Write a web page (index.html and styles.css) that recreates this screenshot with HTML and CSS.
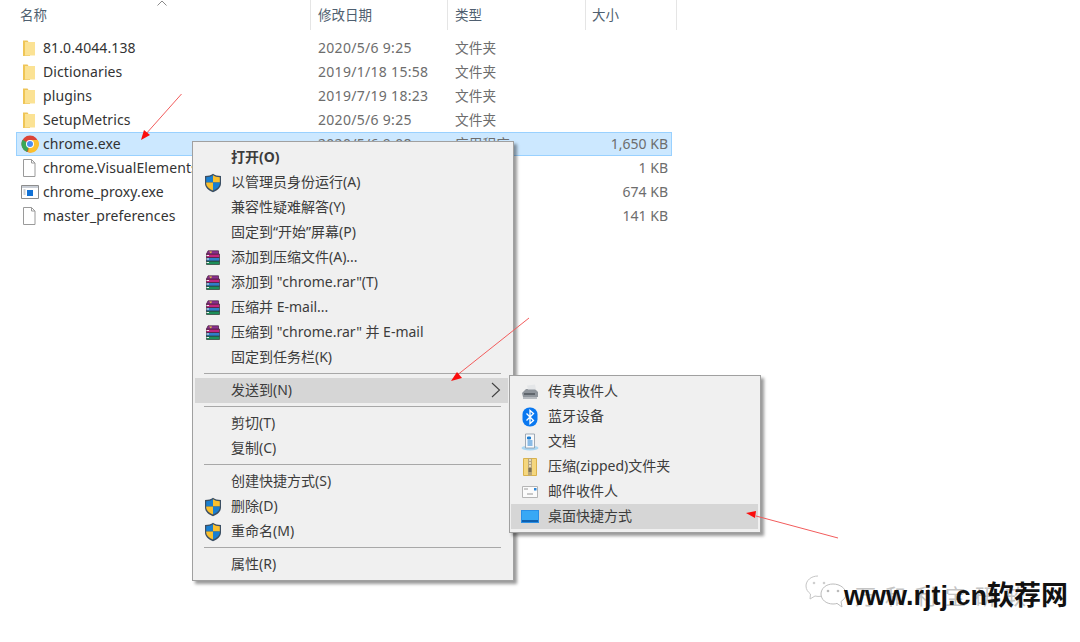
FILE: index.html
```html
<!DOCTYPE html>
<html lang="zh">
<head>
<meta charset="utf-8">
<title>chrome</title>
<link rel="stylesheet" href="styles.css">
</head>
<body>
<svg width="0" height="0" class="defs">
  <defs>
    <symbol id="folder" viewBox="0 0 16 16">
      <path d="M0 .5h4.500l1 1.500H7v14H0z" fill="#eec45a"/>
      <path d="M1.500 2H12v13.500H1.500z" fill="#fbe294"/>
      <path d="M.5 1v14.500H2V1z" fill="#f0c654"/>
    </symbol>
    <symbol id="file" viewBox="0 0 16 20">
      <path d="M.5 1.500h8l3.500 3.500v13.500H.500z" fill="#fff" stroke="#9a9a9a"/>
      <path d="M8.500 1.500V5H12" fill="none" stroke="#9a9a9a"/>
    </symbol>
    <symbol id="shield" viewBox="0 0 18 20">
      <path d="M9 .8c2 1.500 4.500 2.200 8 2.300v7.400c0 4-3.500 7-8 8.700-4.500-1.700-8-4.700-8-8.700V3.100C4.500 3 7 2.300 9 .8z" fill="#3c4f63"/>
      <path d="M9 2.200v7.300H2.200V4.200C5 4 7.300 3.400 9 2.200z" fill="#1a7fd0"/>
      <path d="M9 2.200c1.700 1.200 4 1.800 6.800 2v5.300H9z" fill="#fbc02d"/>
      <path d="M2.200 9.500H9v8C5 16 2.400 13.500 2.200 10.500z" fill="#fbc02d"/>
      <path d="M15.800 9.500H9v8c4-1.500 6.600-4 6.800-7z" fill="#1a7fd0"/>
    </symbol>
    <symbol id="rar" viewBox="0 0 16 16">
      <path d="M1.500 11h13v3.500h-13z" fill="#1d8f5a" stroke="#2d3a33" stroke-width=".7"/>
      <path d="M1.500 7.500h13V11h-13z" fill="#2f7fc9" stroke="#2a3445" stroke-width=".7"/>
      <path d="M1.500 4h13v3.500h-13z" fill="#c0257f" stroke="#43203a" stroke-width=".7"/>
      <path d="M3 .8h10.500V4H1.500z" fill="#8b2f8f" stroke="#43203a" stroke-width=".7"/>
      <path d="M4 1.500h3L6 3.400z" fill="#e8c73e"/>
      <path d="M1.500 5.500h2.500M1.500 9h2.500M1.500 12.500h2.500" stroke="#eee" stroke-width="1.200"/>
    </symbol>
  </defs>
</svg>

<div class="sort-caret">
  <svg width="10" height="6" viewBox="0 0 10 6"><path d="M.5 5.500 5 1l4.500 4.500" fill="none" stroke="#8a8a8a"/></svg>
</div>

<div class="explorer">
  <div class="header">
    <div class="col-h col-name">名称</div>
    <div class="col-h col-date">修改日期</div>
    <div class="col-h col-type">类型</div>
    <div class="col-h col-size">大小</div>
  </div>
  <div class="rows">
    <div class="row">
      <div class="cell-name"><svg class="ficon" width="16" height="16"><use href="#folder"/></svg>81.0.4044.138</div>
      <div class="cell-date">2020/5/6 9:25</div><div class="cell-type">文件夹</div><div class="cell-size"></div>
    </div>
    <div class="row">
      <div class="cell-name"><svg class="ficon" width="16" height="16"><use href="#folder"/></svg>Dictionaries</div>
      <div class="cell-date">2019/1/18 15:58</div><div class="cell-type">文件夹</div><div class="cell-size"></div>
    </div>
    <div class="row">
      <div class="cell-name"><svg class="ficon" width="16" height="16"><use href="#folder"/></svg>plugins</div>
      <div class="cell-date">2019/7/19 18:23</div><div class="cell-type">文件夹</div><div class="cell-size"></div>
    </div>
    <div class="row">
      <div class="cell-name"><svg class="ficon" width="16" height="16"><use href="#folder"/></svg>SetupMetrics</div>
      <div class="cell-date">2020/5/6 9:25</div><div class="cell-type">文件夹</div><div class="cell-size"></div>
    </div>
    <div class="row row-selected">
      <div class="cell-name">
        <svg class="ficon ficon-wide" width="18" height="18" viewBox="0 0 18 18">
          <circle cx="9" cy="9" r="8.500" fill="#db4437"/>
          <path d="M9 9 1.600 4.800A8.500 8.500 0 0 0 6 17z" fill="#3aa757"/>
          <path d="M9 5h7.800A8.500 8.500 0 0 1 7 17.300z" fill="#fbc02d"/>
          <circle cx="9" cy="9" r="4" fill="#fff"/>
          <circle cx="9" cy="9" r="3" fill="#4a8df0"/>
        </svg>chrome.exe</div>
      <div class="cell-date">2020/5/6 9:08</div><div class="cell-type">应用程序</div><div class="cell-size">1,650 KB</div>
    </div>
    <div class="row">
      <div class="cell-name"><svg class="ficon" width="16" height="20"><use href="#file"/></svg>chrome.VisualElementsManifest</div>
      <div class="cell-date">2020/5/6 9:08</div><div class="cell-type">XML 文档</div><div class="cell-size">1 KB</div>
    </div>
    <div class="row">
      <div class="cell-name">
        <svg class="ficon ficon-wide" width="18" height="16" viewBox="0 0 18 16">
          <path d="M.5 1.500h17v13H.500z" fill="#fff" stroke="#8d8d8d"/>
          <path d="M1 2h16v2H1z" fill="#c9ced6"/>
          <path d="M6 6h6v6H6z" fill="#1272d6"/>
          <path d="M2.500 6h2M2.500 8h2M2.500 10h2" stroke="#9aa0a8"/>
        </svg>chrome_proxy.exe</div>
      <div class="cell-date">2020/5/6 9:08</div><div class="cell-type">应用程序</div><div class="cell-size">674 KB</div>
    </div>
    <div class="row">
      <div class="cell-name"><svg class="ficon" width="16" height="20"><use href="#file"/></svg>master_preferences</div>
      <div class="cell-date">2020/5/6 9:08</div><div class="cell-type">文件</div><div class="cell-size">141 KB</div>
    </div>
  </div>
</div>

<div class="menu menu-main">
  <div class="item item-bold"><span class="mi"></span>打开(O)</div>
  <div class="item"><span class="mi"><svg width="18" height="20"><use href="#shield"/></svg></span>以管理员身份运行(A)</div>
  <div class="item"><span class="mi"></span>兼容性疑难解答(Y)</div>
  <div class="item"><span class="mi"></span>固定到“开始”屏幕(P)</div>
  <div class="item"><span class="mi"><svg width="16" height="16"><use href="#rar"/></svg></span>添加到压缩文件(A)...</div>
  <div class="item"><span class="mi"><svg width="16" height="16"><use href="#rar"/></svg></span>添加到 "chrome.rar"(T)</div>
  <div class="item"><span class="mi"><svg width="16" height="16"><use href="#rar"/></svg></span>压缩并 E-mail...</div>
  <div class="item"><span class="mi"><svg width="16" height="16"><use href="#rar"/></svg></span>压缩到 "chrome.rar" 并 E-mail</div>
  <div class="item"><span class="mi"></span>固定到任务栏(K)</div>
  <div class="sep"></div>
  <div class="item item-hover"><span class="mi"></span>发送到(N)
    <svg class="chev" width="10" height="16" viewBox="0 0 10 16"><path d="M1 1l7.500 7L1 15" fill="none" stroke="#404040" stroke-width="1.100"/></svg>
  </div>
  <div class="sep"></div>
  <div class="item"><span class="mi"></span>剪切(T)</div>
  <div class="item"><span class="mi"></span>复制(C)</div>
  <div class="sep"></div>
  <div class="item"><span class="mi"></span>创建快捷方式(S)</div>
  <div class="item"><span class="mi"><svg width="18" height="20"><use href="#shield"/></svg></span>删除(D)</div>
  <div class="item"><span class="mi"><svg width="18" height="20"><use href="#shield"/></svg></span>重命名(M)</div>
  <div class="sep"></div>
  <div class="item"><span class="mi"></span>属性(R)</div>
</div>

<div class="menu menu-sub">
  <div class="item"><span class="si">
    <svg width="18" height="16" viewBox="0 0 18 16">
      <path d="M1 9l4-4h9l3 3v5H2z" fill="#8f959c"/><path d="M6 1.500l8-1 1 5H7z" fill="#e4e6e8"/><path d="M3 9h11v2H3z" fill="#5f656c"/><path d="M2 13h14v2H2z" fill="#b6babf"/>
    </svg></span>传真收件人</div>
  <div class="item"><span class="si">
    <svg width="16" height="20" viewBox="0 0 16 20">
      <rect x=".5" y=".5" width="15" height="19" rx="7" fill="#0a78f0"/>
      <path d="M4.500 6.500l7 7L8 16.500v-13l3.500 3-7 7" fill="none" stroke="#fff" stroke-width="1.300"/>
    </svg></span>蓝牙设备</div>
  <div class="item"><span class="si">
    <svg width="18" height="18" viewBox="0 0 18 18">
      <ellipse cx="9" cy="15" rx="8.500" ry="2.500" fill="#a9d6f2"/>
      <path d="M4.500 1h9v14h-9z" fill="#f7f9fb" stroke="#8a97a5" stroke-width=".8"/>
      <path d="M6.500 4h3v2h-3zM6.500 8h5M6.500 10h5M6.500 12h5" stroke="#1f7fd1" fill="#1f7fd1"/>
    </svg></span>文档</div>
  <div class="item"><span class="si">
    <svg width="14" height="18" viewBox="0 0 14 18">
      <path d="M.5.500h13v17H.500z" fill="#f5d77e" stroke="#d9b24c"/>
      <path d="M5 .5h4v17H5z" fill="#b8a67a"/>
      <path d="M6 2h2M6 5h2M6 8h2" stroke="#f0ead8" stroke-width="1.300"/>
      <path d="M5.500 10h3v4h-3z" fill="#7c7055"/>
    </svg></span>压缩(zipped)文件夹</div>
  <div class="item"><span class="si">
    <svg width="16" height="12" viewBox="0 0 16 12">
      <path d="M.5.500h15v11H.500z" fill="#fbfbfb" stroke="#b5b5b5"/>
      <path d="M12 2h2.500v2.500H12z" fill="#2d86d8"/><path d="M2 3h4" stroke="#9a9a9a"/><path d="M5 7h6v2H5z" fill="#c9c9c9"/>
    </svg></span>邮件收件人</div>
  <div class="item item-hover"><span class="si">
    <svg width="18" height="13" viewBox="0 0 18 13">
      <path d="M0 0h18v13H0z" fill="#2a8fe6"/><path d="M1 1h16v9H1z" fill="#38a8f5"/><path d="M1 11h16" stroke="#0d5fae" stroke-width="2"/>
    </svg></span>桌面快捷方式</div>
</div>

<svg class="arrows" width="1080" height="642" viewBox="0 0 1080 642">
  <g fill="none" stroke="#f25c5c" stroke-width="1">
    <path d="M181.500 94 145 135"/>
    <path d="M529 318 456 376"/>
    <path d="M838 538 756 516"/>
  </g>
  <g fill="#fb0d0d">
    <path d="M141 140l3-10 6 5z"/>
    <path d="M451 381l6-9 5 6z"/>
    <path d="M746 513l10-2-1 7z"/>
  </g>
</svg>

<div class="watermark">
  <svg class="wm-icon" width="44" height="36" viewBox="0 0 44 36">
    <path d="M14 2C7 2 2 6.500 2 12c0 3.500 2 6 4.500 8L6 25l5-3c2 .5 4 .6 6 .3" fill="#fff" stroke="#c6c6c6"/>
    <path d="M29 10c-7 0-12 4.500-12 10s5 10 12 10c1.500 0 3-.2 4-.6l5 3.600-1-5.500c3-2 5-4.500 5-7.500 0-5.500-6-10-13-10z" fill="#fff" stroke="#bdbdbd"/>
    <circle cx="10" cy="9" r="1.300" fill="#cfcfcf"/><circle cx="20" cy="9" r="1.300" fill="#cfcfcf"/>
    <circle cx="24" cy="17" r="1.300" fill="#bbb"/><circle cx="34" cy="17" r="1.300" fill="#bbb"/>
  </svg>
  <div class="wm-faint">万和利宝研软</div>
  <div class="wm-text">www.rjtj.cn软荐网</div>
</div>
</body>
</html>
```
FILE: styles.css
```css
* { box-sizing: border-box; }
html, body { margin: 0; padding: 0; }
body {
  width: 1080px;
  height: 642px;
  overflow: hidden;
  position: relative;
  background: #fff;
  font-family: "Noto Sans", "Noto Sans CJK SC", sans-serif;
  font-size: 14px;
  color: #3d3d3d;
}
.defs { position: absolute; }
.sort-caret { position: absolute; left: 157px; top: 0; line-height: 0; }

.explorer { width: 680px; }
.header { display: flex; height: 30px; color: #4f5f70; font-size: 13.500px; }
.col-h { border-right: 1px solid #e5e5e5; padding-top: 6px; line-height: 18px; }
.col-name { width: 311px; padding-left: 20px; }
.col-date { width: 137px; padding-left: 7px; }
.col-type { width: 138px; padding-left: 7px; }
.col-size { width: 91px; padding-left: 6px; }

.rows { padding: 6px 0 0 16px; width: 672px; }
.row {
  display: flex;
  align-items: center;
  height: 24px;
  border: 1px solid transparent;
  white-space: nowrap;
}
.row-selected { background: #cce8ff; border-color: #99d1ff; }
.cell-name {
  width: 294px; flex: none; display: flex; align-items: center; padding-left: 5px;
  overflow: hidden; color: #333; letter-spacing: .1px; line-height: 20px;
}
.cell-date, .cell-type, .cell-size { color: #6d6d6d; line-height: 20px; flex: none; }
.cell-date { width: 137px; padding-left: 7px; letter-spacing: .3px; }
.cell-type { width: 100px; padding-left: 7px; font-size: 13.700px; }
.cell-size { width: 123px; text-align: right; padding-right: 3px; }
.ficon { margin-right: 4px; margin-left: 1px; flex: none; width: 16px; }
.ficon-wide { width: 18px; margin-left: -1px; margin-right: 4px; }

.menu {
  position: absolute;
  background: #f0f0f0;
  border: 1px solid #a0a0a0;
  box-shadow: 3px 3px 3px rgba(0, 0, 0, .4);
  color: #3c3c3c;
  white-space: nowrap;
}
.menu-main { left: 192px; top: 141px; width: 322px; height: 440px; padding: 3px 5px 3px 2px; }
.menu-sub { left: 509px; top: 375px; width: 252px; height: 158px; padding: 3px 2px 3px 1px; }
.item {
  display: flex;
  align-items: center;
  height: 25px;
  position: relative;
  padding-bottom: 3px;
}
.item-bold { font-weight: 700; }
.item-hover { background: #d6d6d6; }
.mi, .si { margin-top: 3px; height: 20px; display: flex; align-items: center; justify-content: center; flex: none; }
.mi { width: 36px; }
.si { width: 37px; }
.sep { height: 1px; background: #a8a8a8; margin: 3px 7px 4px 9px; }
.chev { position: absolute; right: 7px; top: 4px; }

.arrows { position: absolute; left: 0; top: 0; pointer-events: none; }

.watermark { position: absolute; left: 803px; top: 574px; width: 277px; height: 40px; }
.wm-icon { position: absolute; left: 1px; top: 0; }
.wm-faint {
  position: absolute; left: 52px; top: 8px;
  font-size: 21px; color: #c4c4c4; letter-spacing: 9px; line-height: 28px;
}
.wm-text {
  position: absolute; left: 41px; top: 4px;
  font-family: "Liberation Sans", "Noto Sans CJK SC", sans-serif;
  font-weight: 700; font-size: 27px; line-height: 36px; color: #111;
}
```
